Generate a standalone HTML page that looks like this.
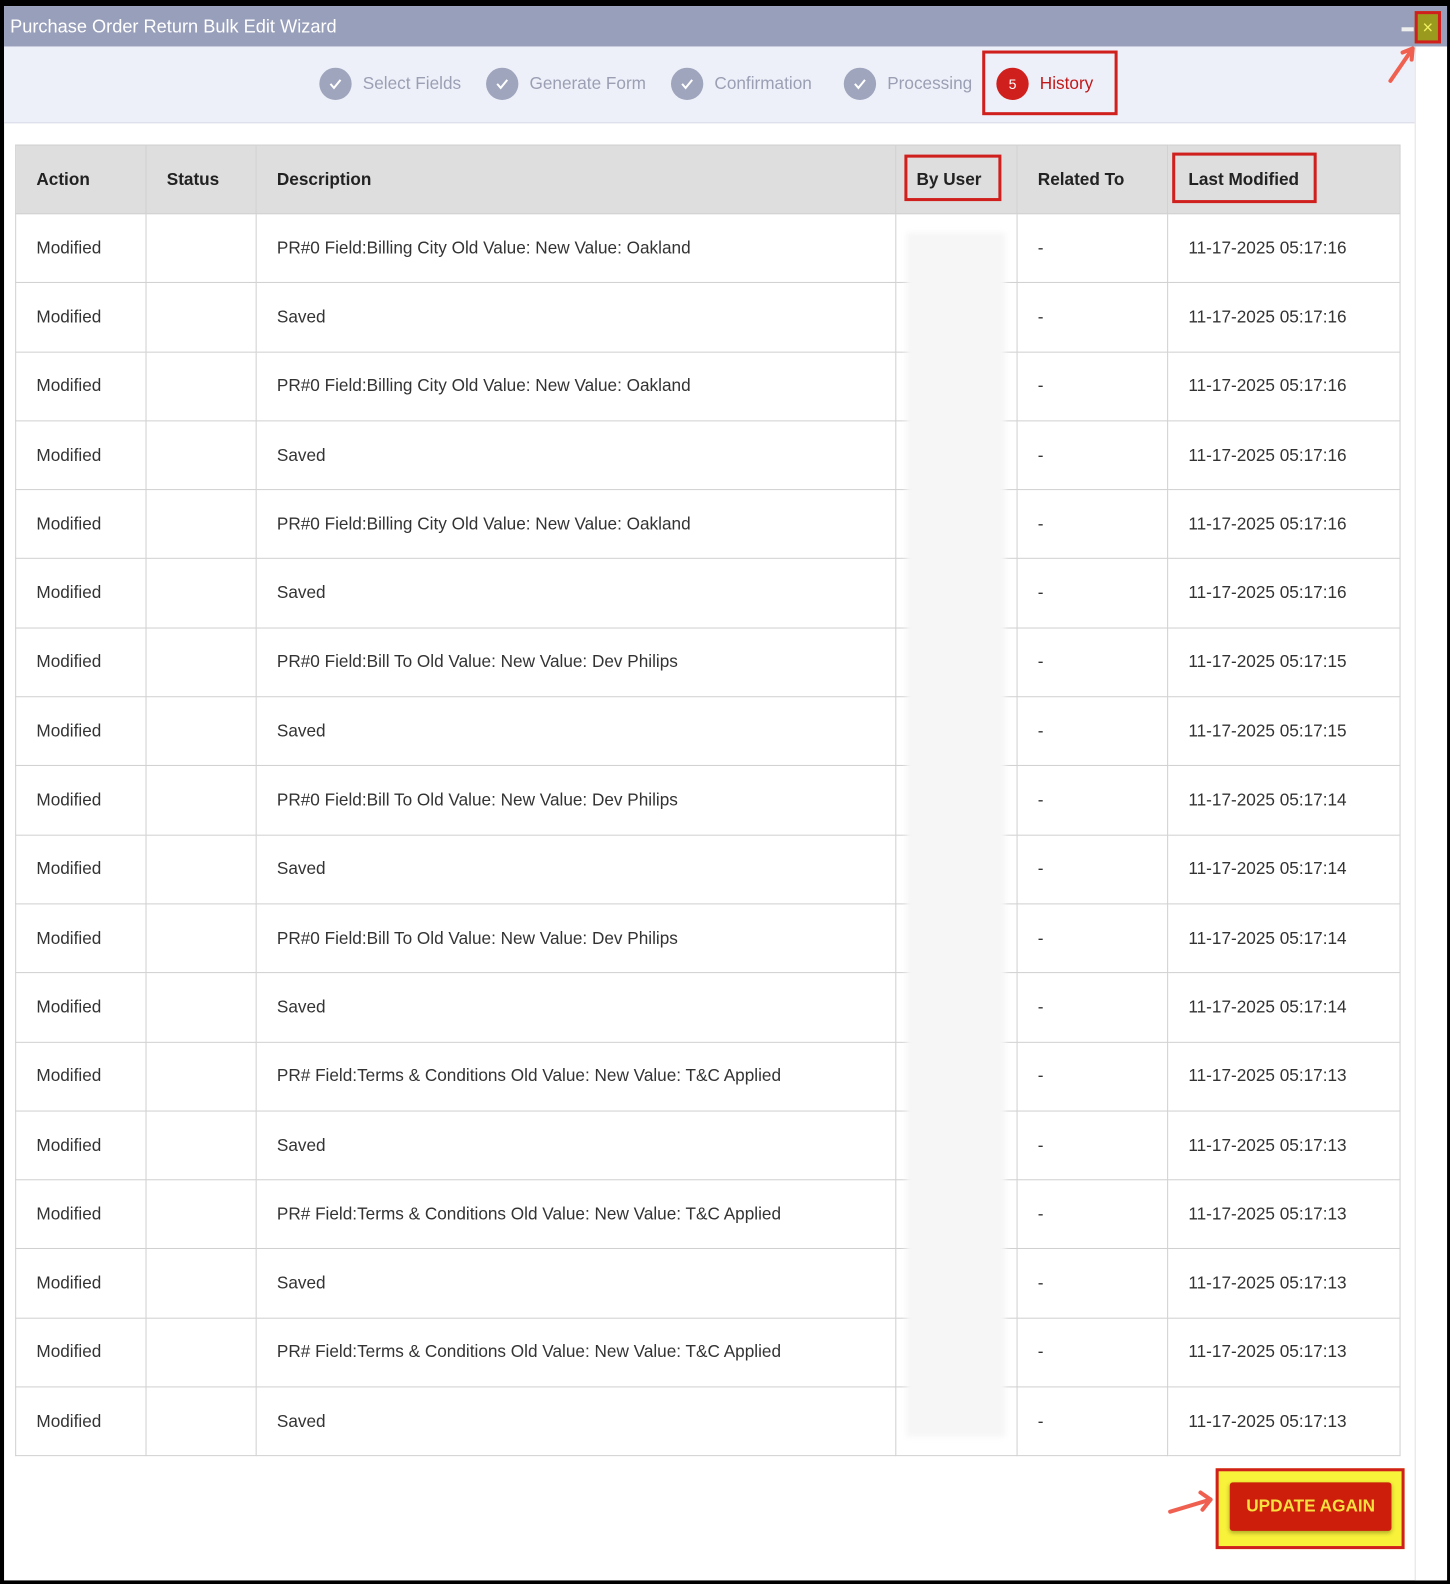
<!DOCTYPE html>
<html><head><style>
*{box-sizing:border-box;margin:0;padding:0}
body{width:1450px;height:1584px;background:#000;position:relative;overflow:hidden;font-family:"Liberation Sans",sans-serif}
#wrap{position:absolute;left:0;top:0;width:1435px;height:1568px;transform:scale(1.0105);transform-origin:0 0}
.modal{position:absolute;left:4px;top:6px;width:1428px;height:1558px;background:#fff}
.title{position:absolute;left:0;top:0;width:1428px;height:40px;background:#989fba;color:#fff;font-size:18px;line-height:40px;padding-left:6px}
.step{position:absolute;left:0;top:40px;width:1396px;height:76px;background:#eef0f9;border-bottom:1px solid #d8dbe6}
.side{position:absolute;left:1396px;top:40px;width:32px;height:1518px;background:#fff;border-left:1px solid #e2e2e2}
.st{position:absolute;top:21px;height:32px;display:flex;align-items:center;font-size:17px;color:#9a9fb3}
.c{width:32px;height:32px;border-radius:50%;background:#9fa5bd;margin-right:11px;display:flex;align-items:center;justify-content:center}
table{position:absolute;left:11px;top:137px;border-collapse:collapse;font-size:17px;color:#333}
td,th{border:1px solid #d0d0d0;padding:0 0 0 20px;text-align:left;height:68.3px}
th{background:#dedede;height:68px;font-weight:bold;color:#222}
.red{position:absolute;border:3px solid #d0201e}
</style></head><body>
<div id="wrap">
<div class="modal">
<div class="title">Purchase Order Return Bulk Edit Wizard</div>
<div style="position:absolute;left:1383px;top:21px;width:12px;height:4px;background:#eee"></div>
<div style="position:absolute;left:1396px;top:5px;width:26px;height:32px;background:#9a9a1e;border:3px solid #d0201e;color:#f0f060;font-size:18px;text-align:center;line-height:26px">×</div>
<div class="step">
<div class="st" style="left:312px"><div class="c"><svg width="16" height="16" viewBox="0 0 16 16"><path d="M3 8l3.5 4L13 4" stroke="#fff" stroke-width="2" fill="none"/></svg></div>Select Fields</div>
<div class="st" style="left:477px"><div class="c"><svg width="16" height="16" viewBox="0 0 16 16"><path d="M3 8l3.5 4L13 4" stroke="#fff" stroke-width="2" fill="none"/></svg></div>Generate Form</div>
<div class="st" style="left:660px"><div class="c"><svg width="16" height="16" viewBox="0 0 16 16"><path d="M3 8l3.5 4L13 4" stroke="#fff" stroke-width="2" fill="none"/></svg></div>Confirmation</div>
<div class="st" style="left:831px"><div class="c"><svg width="16" height="16" viewBox="0 0 16 16"><path d="M3 8l3.5 4L13 4" stroke="#fff" stroke-width="2" fill="none"/></svg></div>Processing</div>
<div class="st" style="left:982px;color:#c0181a"><div class="c" style="background:#d0201e;color:#fff;font-size:14px">5</div>History</div>
<div class="red" style="left:968px;top:4px;width:134px;height:64px"></div>
</div>
<div class="side"></div>
<svg style="position:absolute;left:1366px;top:36px" width="34" height="44"><path d="M6 38L28 6M28 6l-10 4M28 6l-1 11" stroke="#f06050" stroke-width="4" fill="none" stroke-linecap="round"/></svg>
<table>
<tr><th style="width:129px">Action</th><th style="width:109px">Status</th><th style="width:633px">Description</th><th style="width:120px">By User</th><th style="width:149px">Related To</th><th style="width:230px">Last Modified</th></tr>
<tr><td>Modified</td><td></td><td>PR#0 Field:Billing City Old Value: New Value: Oakland</td><td></td><td>-</td><td>11-17-2025 05:17:16</td></tr>
<tr><td>Modified</td><td></td><td>Saved</td><td></td><td>-</td><td>11-17-2025 05:17:16</td></tr>
<tr><td>Modified</td><td></td><td>PR#0 Field:Billing City Old Value: New Value: Oakland</td><td></td><td>-</td><td>11-17-2025 05:17:16</td></tr>
<tr><td>Modified</td><td></td><td>Saved</td><td></td><td>-</td><td>11-17-2025 05:17:16</td></tr>
<tr><td>Modified</td><td></td><td>PR#0 Field:Billing City Old Value: New Value: Oakland</td><td></td><td>-</td><td>11-17-2025 05:17:16</td></tr>
<tr><td>Modified</td><td></td><td>Saved</td><td></td><td>-</td><td>11-17-2025 05:17:16</td></tr>
<tr><td>Modified</td><td></td><td>PR#0 Field:Bill To Old Value: New Value: Dev Philips</td><td></td><td>-</td><td>11-17-2025 05:17:15</td></tr>
<tr><td>Modified</td><td></td><td>Saved</td><td></td><td>-</td><td>11-17-2025 05:17:15</td></tr>
<tr><td>Modified</td><td></td><td>PR#0 Field:Bill To Old Value: New Value: Dev Philips</td><td></td><td>-</td><td>11-17-2025 05:17:14</td></tr>
<tr><td>Modified</td><td></td><td>Saved</td><td></td><td>-</td><td>11-17-2025 05:17:14</td></tr>
<tr><td>Modified</td><td></td><td>PR#0 Field:Bill To Old Value: New Value: Dev Philips</td><td></td><td>-</td><td>11-17-2025 05:17:14</td></tr>
<tr><td>Modified</td><td></td><td>Saved</td><td></td><td>-</td><td>11-17-2025 05:17:14</td></tr>
<tr><td>Modified</td><td></td><td>PR# Field:Terms &amp; Conditions Old Value: New Value: T&amp;C Applied</td><td></td><td>-</td><td>11-17-2025 05:17:13</td></tr>
<tr><td>Modified</td><td></td><td>Saved</td><td></td><td>-</td><td>11-17-2025 05:17:13</td></tr>
<tr><td>Modified</td><td></td><td>PR# Field:Terms &amp; Conditions Old Value: New Value: T&amp;C Applied</td><td></td><td>-</td><td>11-17-2025 05:17:13</td></tr>
<tr><td>Modified</td><td></td><td>Saved</td><td></td><td>-</td><td>11-17-2025 05:17:13</td></tr>
<tr><td>Modified</td><td></td><td>PR# Field:Terms &amp; Conditions Old Value: New Value: T&amp;C Applied</td><td></td><td>-</td><td>11-17-2025 05:17:13</td></tr>
<tr><td>Modified</td><td></td><td>Saved</td><td></td><td>-</td><td>11-17-2025 05:17:13</td></tr>
</table>
<div style="position:absolute;left:893px;top:224px;width:98px;height:1192px;background:#f6f6f6;filter:blur(3px)"></div>
<div class="red" style="left:891px;top:147px;width:96px;height:46px"></div>
<div class="red" style="left:1156px;top:145px;width:143px;height:50px"></div>
<div style="position:absolute;left:1199px;top:1447px;width:187px;height:80px;background:#f8f23a;border:3px solid #d0201e"></div>
<div style="position:absolute;left:1213px;top:1461px;width:160px;height:48px;background:#cc1e0a;border-radius:3px;box-shadow:0 2px 4px rgba(0,0,0,.3);color:#f8e040;font-size:17px;font-weight:bold;text-align:center;line-height:48px">UPDATE AGAIN</div>
<svg style="position:absolute;left:1150px;top:1466px" width="50" height="30"><path d="M4 24L44 12M44 12l-10-7M44 12l-8 10" stroke="#f06050" stroke-width="4" fill="none" stroke-linecap="round"/></svg>
</div>
</div>
</body></html>
